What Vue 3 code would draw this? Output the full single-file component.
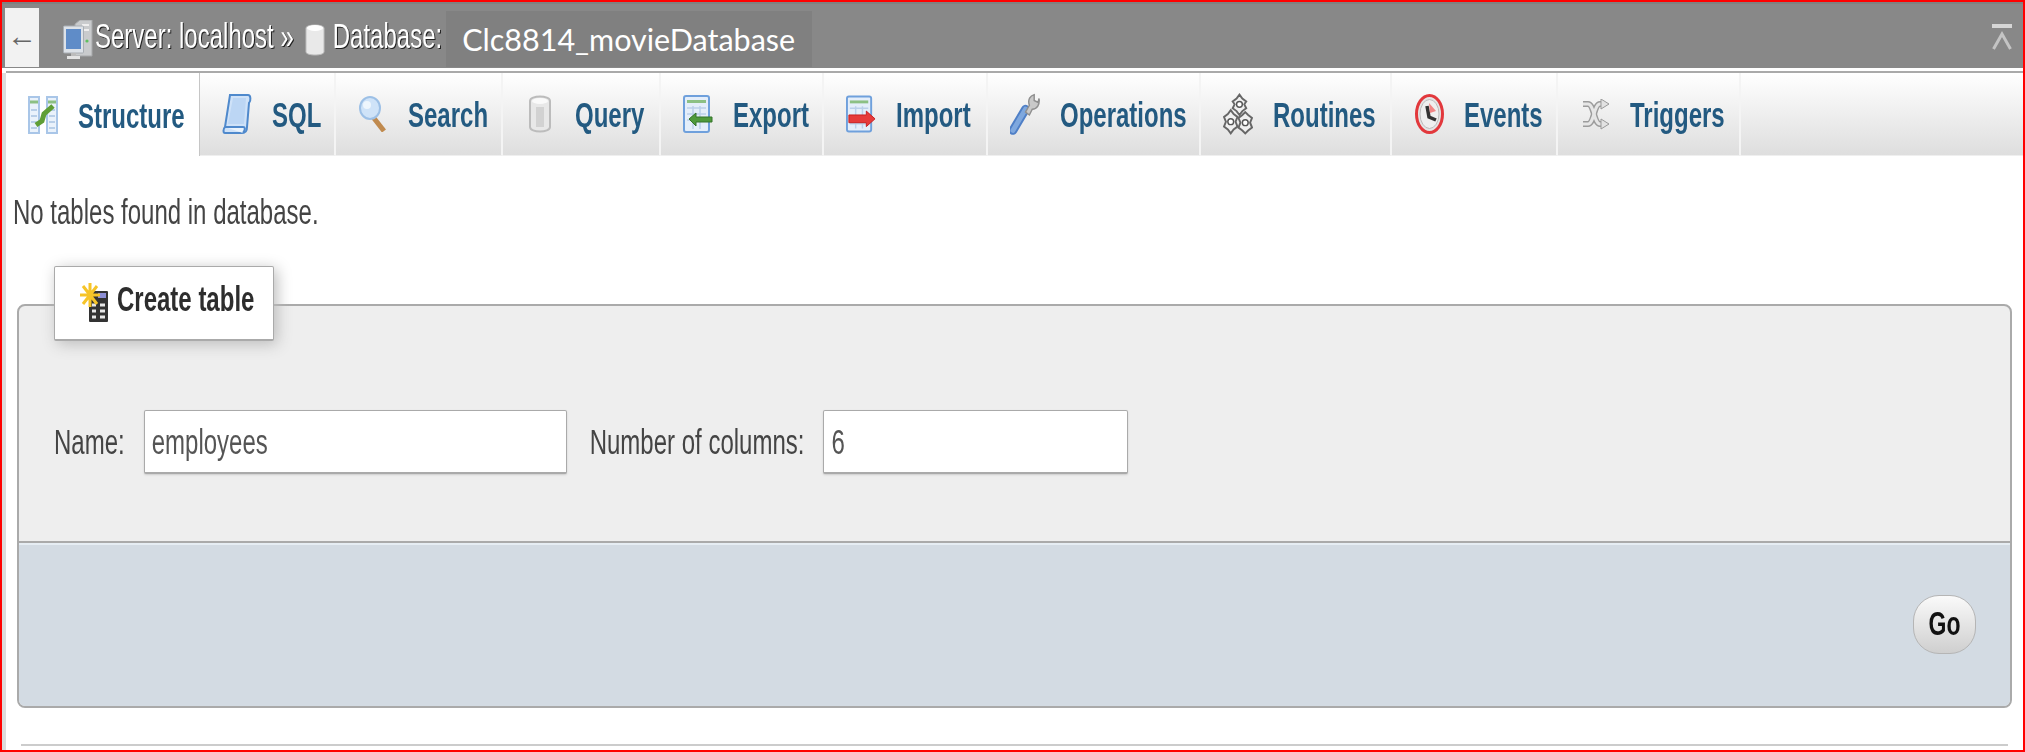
<script setup>
const tabs = [
  { name: 'Structure', icon: 'structure', width: 194, active: true },
  { name: 'SQL', icon: 'sql', width: 136 },
  { name: 'Search', icon: 'search', width: 167 },
  { name: 'Query', icon: 'query', width: 158 },
  { name: 'Export', icon: 'export', width: 163 },
  { name: 'Import', icon: 'import', width: 164 },
  { name: 'Operations', icon: 'operations', width: 213 },
  { name: 'Routines', icon: 'routines', width: 191 },
  { name: 'Events', icon: 'events', width: 166 },
  { name: 'Triggers', icon: 'triggers', width: 183 }
]
</script>

<template>
  <div class="page">
    <div class="topbar">
      <div class="back">←</div>
      <svg class="server-icon" width="31" height="40" viewBox="0 0 31 40">
        <path d="M12 4L17 0H29V36H12Z" fill="#c9cbcd" stroke="#a5a7a9" />
        <rect x="19" y="4" width="7" height="2" fill="#eee" />
        <rect x="19" y="9" width="7" height="2" fill="#eee" />
        <circle cx="24" cy="21" r="1.6" fill="#5fc05f" />
        <rect x="0.5" y="6" width="20" height="27" rx="1" fill="#dde2e8" stroke="#a9aeb4" />
        <rect x="3" y="9" width="15" height="20" fill="#5f8cc8" />
        <rect x="8" y="33" width="5" height="3" fill="#bcbcbc" />
        <rect x="4" y="36" width="13" height="3" fill="#e4e4e4" />
      </svg>
      <span class="crumb tall server-text">Server: localhost »</span>
      <svg class="db-icon" width="20" height="34" viewBox="0 0 20 34">
        <path d="M1 5C1 1 19 1 19 5V29C19 33 1 33 1 29Z" fill="#e9e9e9" stroke="#bdbdbd" />
        <ellipse cx="10" cy="5" rx="8" ry="3" fill="#fff" />
      </svg>
      <span class="crumb tall db-text">Database:</span>
      <div class="db-name">Clc8814_movieDatabase</div>
      <svg class="collapse" width="20" height="27" viewBox="0 0 20 27">
        <rect x="0" y="0" width="20" height="4" fill="#d6d6d6" />
        <path d="M1.5 25L10 10L18.5 25" fill="none" stroke="#c4c4c4" stroke-width="3" />
      </svg>
    </div>

    <div class="content">
      <div class="tabs">
        <div
          v-for="tab in tabs"
          :key="tab.name"
          class="tab"
          :class="{ active: tab.active }"
          :style="{ width: tab.width + 'px' }"
        >
          <div class="tab-icon">
            <svg v-if="tab.icon === 'structure'" width="30" height="38" viewBox="0 0 30 38">
              <rect x="1" y="1" width="10" height="36" fill="#eaf2fb" stroke="#a9c6e8" stroke-width="2" />
              <rect x="19" y="1" width="10" height="36" fill="#eaf2fb" stroke="#a9c6e8" stroke-width="2" />
              <path d="M2 6H10M20 6H28" stroke="#8cc084" stroke-width="3" />
              <path d="M3 14H9M3 20H9M3 26H9M3 32H9M21 14H27M21 20H27M21 26H27M21 32H27" stroke="#b9cfe8" stroke-width="2" />
              <path d="M8 29L14 25L16 18L25 10" fill="none" stroke="#5f9e36" stroke-width="5" />
            </svg>
            <svg v-else-if="tab.icon === 'sql'" width="30" height="42" viewBox="0 0 30 42">
              <path d="M8 2H26C29 2 29 8 27 10L25 34C25 38 24 40 20 40H3C1 40 1 36 3 34Z" fill="#cfe2f8" stroke="#4f89cc" stroke-width="2" />
              <path d="M11 5H24L22 31H6Z" fill="#bcd6f4" />
              <path d="M3 34H21C23 34 24 36 21 40" fill="#eaf3fc" stroke="#4f89cc" stroke-width="2" />
            </svg>
            <svg v-else-if="tab.icon === 'search'" width="28" height="36" viewBox="0 0 28 36">
              <path d="M14 21L25 35" stroke="#c08a4e" stroke-width="5" />
              <ellipse cx="11" cy="12" rx="10" ry="11" fill="#cfe3f8" stroke="#9dc0e6" stroke-width="2" />
              <ellipse cx="8" cy="9" rx="4" ry="4" fill="#eef6fd" />
            </svg>
            <svg v-else-if="tab.icon === 'query'" width="24" height="38" viewBox="0 0 24 38">
              <path d="M2 6C2 0 22 0 22 6V32C22 38 2 38 2 32Z" fill="#e8e8e8" stroke="#bcbcbc" stroke-width="2" />
              <ellipse cx="12" cy="6" rx="8" ry="3" fill="#fafafa" />
              <path d="M8 12V32H16V12Z" fill="#d2d2d2" />
            </svg>
            <svg v-else-if="tab.icon === 'export'" width="30" height="38" viewBox="0 0 30 38">
              <rect x="1" y="1" width="25" height="36" rx="2" fill="#e4eefa" stroke="#6fa0dc" stroke-width="2" />
              <rect x="4" y="5" width="19" height="3" fill="#8cc084" />
              <path d="M4 13H23M4 19H23M4 25H23M10 11V34M17 11V34" stroke="#bad0ea" stroke-width="1.5" />
              <path d="M6 24L13 18V22H29V27H13V31Z" fill="#4f9a3c" stroke="#35752a" />
            </svg>
            <svg v-else-if="tab.icon === 'import'" width="31" height="38" viewBox="0 0 31 38">
              <rect x="1" y="1" width="25" height="36" rx="2" fill="#e4eefa" stroke="#6fa0dc" stroke-width="2" />
              <rect x="4" y="5" width="19" height="3" fill="#8cc084" />
              <path d="M4 13H23M4 29H23M10 11V34M17 11V34" stroke="#bad0ea" stroke-width="1.5" />
              <path d="M3 20H21V16L30 24L21 32V28H3Z" fill="#e63a3a" stroke="#c81f1f" />
            </svg>
            <svg v-else-if="tab.icon === 'operations'" width="31" height="42" viewBox="0 0 31 42">
              <path d="M3 38L16 16" stroke="#4f7fc6" stroke-width="9" stroke-linecap="round" />
              <path d="M3 38L16 16" stroke="#7fa8de" stroke-width="5" stroke-linecap="round" />
              <path d="M16 19L20 12C18 6 21 2 25 1L25 7L29 9L30 5C31 11 28 16 23 16L20 22Z" fill="#c9c9c9" stroke="#8f8f8f" stroke-width="1.5" />
            </svg>
            <svg v-else-if="tab.icon === 'routines'" width="31" height="42" viewBox="0 0 31 42">
              <g fill="#f0f0f0" stroke="#666" stroke-width="2">
                <path d="M17 1L20 5L24 8L22 11L24 15L20 18L17 22L14 18L10 15L12 11L10 8L14 5Z" />
                <path d="M8 17L11 21L15 24L13 29L15 34L11 37L8 41L5 37L1 34L3 29L1 24L5 21Z" />
                <path d="M23 19L26 22L30 25L28 30L30 35L26 38L23 41L20 38L16 35L18 30L16 25L20 22Z" />
              </g>
              <g fill="#fff" stroke="#555" stroke-width="1.5">
                <circle cx="17" cy="11" r="3" />
                <circle cx="8" cy="29" r="3" />
                <circle cx="23" cy="30" r="3" />
              </g>
            </svg>
            <svg v-else-if="tab.icon === 'events'" width="29" height="40" viewBox="0 0 29 40">
              <ellipse cx="14.5" cy="20" rx="13" ry="18.5" fill="#e4e4e4" stroke="#e2383c" stroke-width="3" />
              <ellipse cx="14.5" cy="20" rx="9.5" ry="14.5" fill="#efefef" stroke="#bbb" />
              <path d="M12 12L14 23L21 26" fill="none" stroke="#333" stroke-width="3.5" />
              <path d="M14 9L21 17L15 19Z" fill="#f08585" />
            </svg>
            <svg v-else-if="tab.icon === 'triggers'" width="28" height="31" viewBox="0 0 28 31">
              <g fill="none" stroke="#9c9c9c" stroke-width="6">
                <path d="M2 5H7C13 5 13 25 19 25H22" />
                <path d="M2 25H7C13 25 13 5 19 5H22" />
              </g>
              <g fill="none" stroke="#e6e6e6" stroke-width="3">
                <path d="M2 5H7C13 5 13 25 19 25H22" />
                <path d="M2 25H7C13 25 13 5 19 5H22" />
              </g>
              <path d="M20 0L28 5L20 10Z" fill="#e2e2e2" stroke="#999" />
              <path d="M20 20L28 25L20 30Z" fill="#e2e2e2" stroke="#999" />
            </svg>
          </div>
          <span class="tall tab-label">{{ tab.name }}</span>
        </div>
        <div class="tabs-rest"></div>
      </div>

      <p class="notice"><span class="tall">No tables found in database.</span></p>

      <div class="fieldset">
        <div class="legend">
          <svg width="29" height="40" viewBox="0 0 29 40">
            <rect x="9" y="8" width="19" height="31" rx="1" fill="#333" />
            <rect x="18" y="10" width="8" height="5" fill="#8d8fd6" />
            <path d="M12 22H16M20 22H25M12 28H16M20 28H25M12 34H16M20 34H25" stroke="#e8e8e8" stroke-width="3" />
            <path d="M10 0V24M0 12H20M3 3L17 21M17 3L3 21" stroke="#f6c428" stroke-width="3" />
          </svg>
          <span class="tall legend-label">Create table</span>
        </div>
        <div class="form">
          <span class="tall field-label">Name:</span>
          <div class="input name-input"><span class="tall">employees</span></div>
          <span class="tall field-label columns-label">Number of columns:</span>
          <div class="input columns-input"><span class="tall">6</span></div>
        </div>
        <div class="footer">
          <div class="go"><span class="tall">Go</span></div>
        </div>
      </div>

      <div class="rule"></div>
    </div>
  </div>
</template>

<style>
html, body {
  margin: 0;
  background: #fff;
}
</style>

<style scoped>
.page {
  width: 2025px;
  height: 752px;
  box-sizing: border-box;
  border: 2px solid #f00;
  overflow: hidden;
  background: #fff;
  font-family: "Liberation Sans", Arial, sans-serif;
  color: #444;
}
.tall {
  display: inline-block;
  transform: scaleY(1.45);
  filter: blur(0.3px);
}
svg {
  filter: blur(0.5px);
}
.topbar {
  height: 66px;
  display: flex;
  align-items: center;
  background: #888;
  border-top: 2px solid #808080;
  box-sizing: border-box;
}
.back {
  width: 34px;
  height: 59px;
  margin-left: 3px;
  margin-top: 3px;
  background: #f2f2f2;
  color: #666;
  font-size: 30px;
  line-height: 56px;
  text-align: center;
}
.server-icon {
  margin-left: 24px;
  margin-top: 8px;
  flex: none;
}
.crumb {
  color: #fff;
  font-size: 24px;
  text-shadow: 1px 1px 0 #222;
  white-space: nowrap;
}
.server-text {
  margin-left: 1px;
}
.db-icon {
  margin-left: 11px;
  margin-top: 8px;
  flex: none;
}
.db-text {
  margin-left: 8px;
}
.db-name {
  margin-left: 4px;
  margin-top: 6px;
  width: 366px;
  height: 56px;
  box-sizing: border-box;
  padding-left: 16px;
  background: #808080;
  color: #fff;
  font-family: Lato, sans-serif;
  font-size: 30.5px;
  line-height: 56px;
  white-space: nowrap;
}
.collapse {
  margin-left: auto;
  margin-right: 11px;
  margin-top: 3px;
  flex: none;
}
.content {
  height: 680px;
  margin-top: 5px;
  box-sizing: border-box;
  border-left: 4px solid #dcdcdc;
}
.tabs {
  display: flex;
  height: 83px;
  box-shadow: 0 -2px 0 #aaa, 0 -4px 0 #fff;
}
.tab {
  flex: none;
  height: 100%;
  box-sizing: border-box;
  padding-left: 22px;
  display: flex;
  align-items: center;
  gap: 20px;
  background: linear-gradient(#fff, #dedede);
  border-right: 2px solid #f4f4f4;
  border-bottom: 1px solid #efefef;
  color: #235a81;
  font-weight: bold;
  font-size: 24px;
  white-space: nowrap;
}
.tab.active {
  background: #fff;
  border-bottom: 0;
  border-right: 1px solid #c6c6c6;
}
.tab-label {
  margin-top: 2px;
}
.tab-icon {
  width: 30px;
  height: 42px;
  display: flex;
  align-items: center;
  justify-content: center;
}
.tabs-rest {
  flex: 1;
  background: linear-gradient(#fff, #dedede);
  border-bottom: 1px solid #efefef;
}
.notice {
  margin: 38px 0 0 7px;
  font-size: 24px;
  line-height: 36px;
  color: #444;
}
.fieldset {
  width: 1995px;
  height: 404px;
  margin: 74px 0 0 11px;
  box-sizing: border-box;
  border: 2px solid #aaa;
  border-radius: 8px;
  background: #eee;
  display: flex;
  flex-direction: column;
}
.legend {
  width: 220px;
  height: 75px;
  margin: -40px 0 0 35px;
  box-sizing: border-box;
  display: flex;
  align-items: center;
  gap: 8px;
  padding-left: 25px;
  background: #fff;
  border: 1px solid #aaa;
  border-bottom-width: 2px;
  border-radius: 2px;
  box-shadow: 3px 3px 15px #bbb;
  color: #2d2d2d;
  font-weight: bold;
  font-size: 24px;
}
.legend-label {
  margin-bottom: 8px;
}
.form {
  height: 200px;
  display: flex;
  align-items: center;
  padding: 1px 0 0 35px;
  box-sizing: border-box;
  font-size: 24px;
}
.field-label {
  color: #444;
  white-space: nowrap;
}
.input {
  height: 64px;
  box-sizing: border-box;
  background: #fff;
  border: 1px solid #aaa;
  border-bottom-width: 2px;
  border-radius: 2px;
  box-shadow: 0 1px 2px #ccc;
  padding-left: 7px;
  line-height: 62px;
  color: #555;
  font-size: 24px;
}
.name-input {
  width: 423px;
  margin-left: 19px;
}
.columns-label {
  margin-left: 23px;
}
.columns-input {
  width: 305px;
  margin-left: 19px;
}
.footer {
  flex: 1;
  border-top: 2px solid #aaa;
  border-radius: 0 0 6px 6px;
  background: #d3dbe3;
  box-shadow: inset 0 2px 0 #e6edf3;
  display: flex;
  align-items: center;
  justify-content: flex-end;
  padding-right: 34px;
}
.go {
  width: 63px;
  height: 59px;
  box-sizing: border-box;
  border: 1px solid #b5b5b5;
  border-radius: 26px;
  background: linear-gradient(#fafafa, #cfcfcf);
  color: #111;
  font-weight: bold;
  font-size: 23px;
  line-height: 57px;
  text-align: center;
}
.rule {
  height: 2px;
  width: 1987px;
  margin: 36px 0 0 15px;
  background: #ccc;
}
</style>
